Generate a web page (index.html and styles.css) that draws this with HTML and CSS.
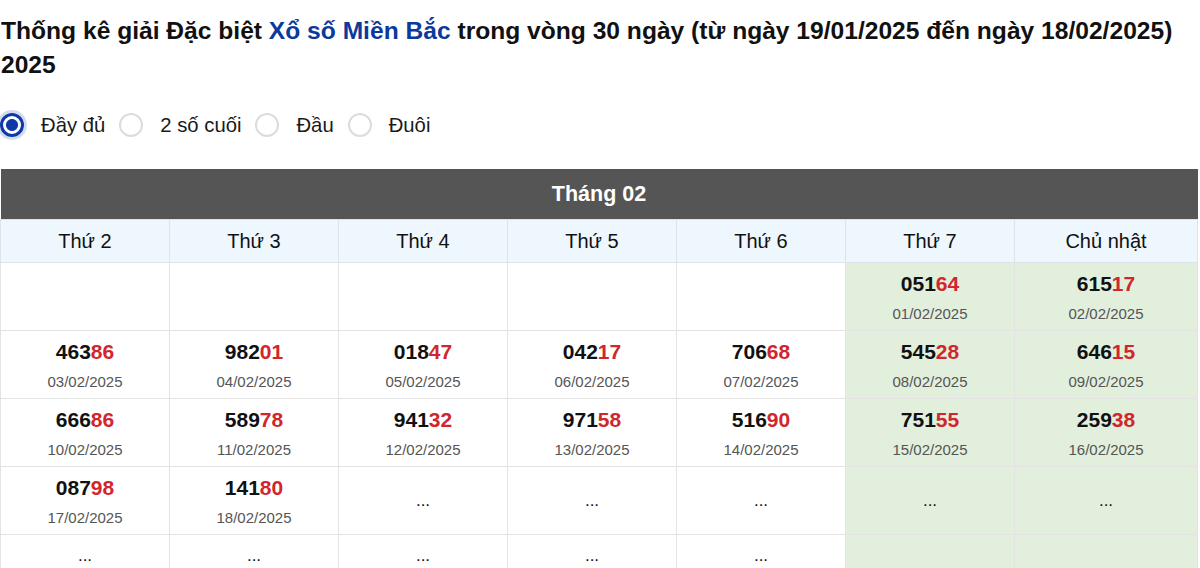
FILE: index.html
```html
<!DOCTYPE html>
<html lang="vi">
<head>
<meta charset="utf-8">
<title>Thống kê giải Đặc biệt</title>
<link rel="stylesheet" href="styles.css">
</head>
<body>
<h1 class="title">Thống kê giải Đặc biệt <a class="title-link" href="#">Xổ số Miền Bắc</a> trong vòng 30 ngày (từ ngày 19/01/2025 đến ngày 18/02/2025) 2025</h1>

<div class="options">
  <label class="opt"><span class="radio checked"></span><span class="opt-text">Đầy đủ</span></label>
  <label class="opt"><span class="radio"></span><span class="opt-text">2 số cuối</span></label>
  <label class="opt"><span class="radio"></span><span class="opt-text">Đầu</span></label>
  <label class="opt"><span class="radio"></span><span class="opt-text">Đuôi</span></label>
</div>

<table class="cal">
  <colgroup>
    <col class="c"><col class="c"><col class="c"><col class="c"><col class="c"><col class="c"><col>
  </colgroup>
  <thead>
    <tr><th colspan="7" class="month">Tháng 02</th></tr>
    <tr class="days">
      <th>Thứ 2</th><th>Thứ 3</th><th>Thứ 4</th><th>Thứ 5</th><th>Thứ 6</th><th>Thứ 7</th><th>Chủ nhật</th>
    </tr>
  </thead>
  <tbody>
    <tr>
      <td></td><td></td><td></td><td></td><td></td>
      <td class="we"><div class="num">051<span class="hl">64</span></div><div class="date">01/02/2025</div></td>
      <td class="we"><div class="num">615<span class="hl">17</span></div><div class="date">02/02/2025</div></td>
    </tr>
    <tr>
      <td><div class="num">463<span class="hl">86</span></div><div class="date">03/02/2025</div></td>
      <td><div class="num">982<span class="hl">01</span></div><div class="date">04/02/2025</div></td>
      <td><div class="num">018<span class="hl">47</span></div><div class="date">05/02/2025</div></td>
      <td><div class="num">042<span class="hl">17</span></div><div class="date">06/02/2025</div></td>
      <td><div class="num">706<span class="hl">68</span></div><div class="date">07/02/2025</div></td>
      <td class="we"><div class="num">545<span class="hl">28</span></div><div class="date">08/02/2025</div></td>
      <td class="we"><div class="num">646<span class="hl">15</span></div><div class="date">09/02/2025</div></td>
    </tr>
    <tr>
      <td><div class="num">666<span class="hl">86</span></div><div class="date">10/02/2025</div></td>
      <td><div class="num">589<span class="hl">78</span></div><div class="date">11/02/2025</div></td>
      <td><div class="num">941<span class="hl">32</span></div><div class="date">12/02/2025</div></td>
      <td><div class="num">971<span class="hl">58</span></div><div class="date">13/02/2025</div></td>
      <td><div class="num">516<span class="hl">90</span></div><div class="date">14/02/2025</div></td>
      <td class="we"><div class="num">751<span class="hl">55</span></div><div class="date">15/02/2025</div></td>
      <td class="we"><div class="num">259<span class="hl">38</span></div><div class="date">16/02/2025</div></td>
    </tr>
    <tr>
      <td><div class="num">087<span class="hl">98</span></div><div class="date">17/02/2025</div></td>
      <td><div class="num">141<span class="hl">80</span></div><div class="date">18/02/2025</div></td>
      <td class="dots">...</td>
      <td class="dots">...</td>
      <td class="dots">...</td>
      <td class="we dots">...</td>
      <td class="we dots">...</td>
    </tr>
    <tr class="last">
      <td class="dots">...</td>
      <td class="dots">...</td>
      <td class="dots">...</td>
      <td class="dots">...</td>
      <td class="dots">...</td>
      <td class="we dots"></td>
      <td class="we dots"></td>
    </tr>
  </tbody>
</table>
</body>
</html>
```

FILE: styles.css
```css
html, body {
  margin: 0;
  padding: 0;
  background: #fff;
}
body {
  font-family: "Liberation Sans", Arial, sans-serif;
  color: #111;
  width: 1200px;
}
.title {
  margin: 14px 0 0 1px;
  font-size: 24.6px;
  line-height: 34px;
  font-weight: bold;
  color: #111;
}
.title-link {
  color: #0b3a9b;
  text-decoration: none;
}
.options {
  display: flex;
  align-items: center;
  gap: 14px;
  margin-top: 28px;
  height: 30px;
}
.opt {
  display: flex;
  align-items: center;
  gap: 17px;
}
.radio {
  box-sizing: border-box;
  width: 24px;
  height: 24px;
  border-radius: 50%;
  border: 2px solid #dcdcdc;
  background: #fff;
  display: inline-block;
}
.radio.checked {
  border: 3px solid #0d3aa8;
  background: radial-gradient(circle, #0d3aa8 0 5.5px, #fff 6.5px);
  box-shadow: 0 0 0 3px rgba(13, 58, 168, 0.18);
}
.opt-text {
  font-size: 20.3px;
  color: #1a1a1a;
}
.cal {
  margin-top: 29px;
  width: 1198px;
  border-collapse: collapse;
  table-layout: fixed;
}
.cal col.c {
  width: 169px;
}
.month {
  background: #555;
  color: #fff;
  font-size: 21.5px;
  font-weight: bold;
  height: 50px;
  padding: 0;
  border: none;
}
.days th {
  background: #eef6fe;
  font-weight: normal;
  font-size: 20px;
  color: #111;
  height: 42px;
  padding: 0;
  border: 1px solid #e0e3e6;
}
.cal td {
  border: 1px solid #e3e3e3;
  height: 67px;
  padding: 0;
  text-align: center;
  vertical-align: top;
}
.cal td.we {
  background: #e1efdc;
}
.num {
  margin-top: 8px;
  font-size: 21px;
  line-height: 26px;
  font-weight: bold;
  color: #111;
}
.hl {
  color: #d1262d;
}
.date {
  margin-top: 7px;
  font-size: 15px;
  line-height: 20px;
  color: #555;
}
.cal td.dots {
  vertical-align: middle;
  font-size: 17px;
  color: #111;
}
.cal tr.last td.dots {
  vertical-align: top;
  padding-top: 11px;
  line-height: 20px;
}
```
